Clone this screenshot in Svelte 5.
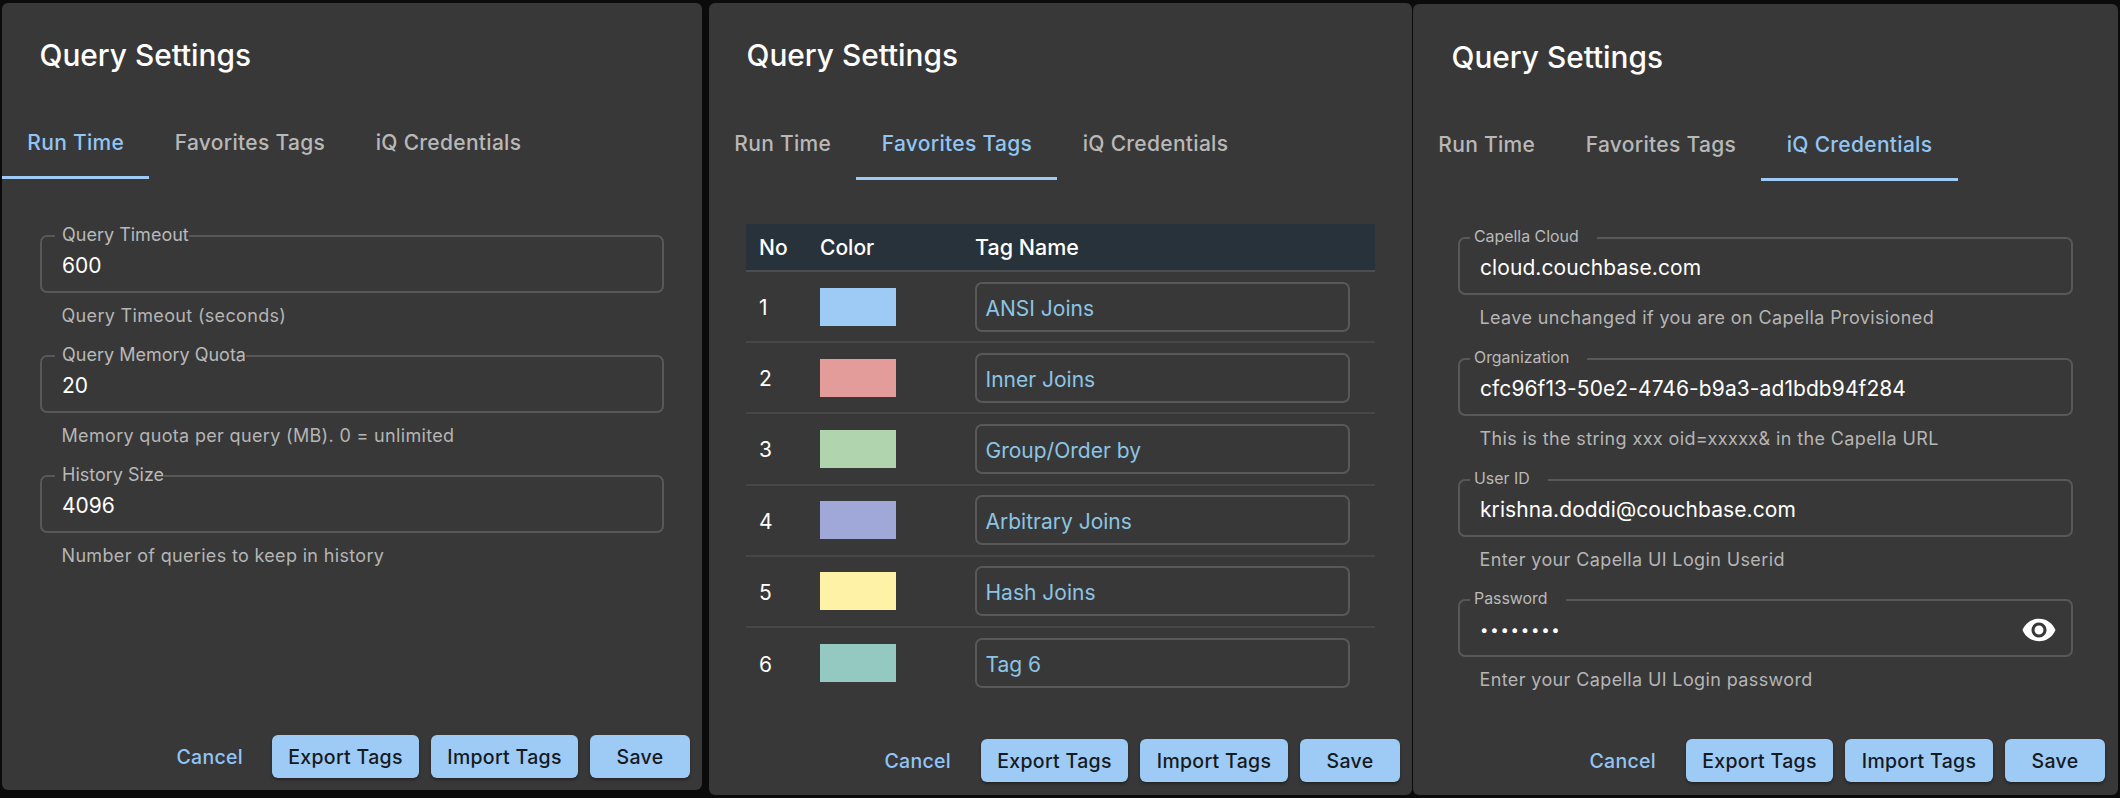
<script>
  const tabs = ['Run Time', 'Favorites Tags', 'iQ Credentials'];
  const runtime = [
    { label: 'Query Timeout', value: '600', help: 'Query Timeout (seconds)' },
    { label: 'Query Memory Quota', value: '20', help: 'Memory quota per query (MB). 0 = unlimited' },
    { label: 'History Size', value: '4096', help: 'Number of queries to keep in history' }
  ];
  const tags = [
    { no: 1, color: '#9ecbf6', name: 'ANSI Joins' },
    { no: 2, color: '#e49c9a', name: 'Inner Joins' },
    { no: 3, color: '#b0d4ae', name: 'Group/Order by' },
    { no: 4, color: '#a0a8d8', name: 'Arbitrary Joins' },
    { no: 5, color: '#fdf2a6', name: 'Hash Joins' },
    { no: 6, color: '#93c9c1', name: 'Tag 6' }
  ];
  const creds = [
    { label: 'Capella Cloud', value: 'cloud.couchbase.com', help: 'Leave unchanged if you are on Capella Provisioned' },
    { label: 'Organization', value: 'cfc96f13-50e2-4746-b9a3-ad1bdb94f284', help: 'This is the string xxx oid=xxxxx& in the Capella URL' },
    { label: 'User ID', value: 'krishna.doddi@couchbase.com', help: 'Enter your Capella UI Login Userid' },
    { label: 'Password', value: '••••••••', help: 'Enter your Capella UI Login password', secret: true }
  ];
</script>

{#snippet head(active)}
  <h2 class="title">Query Settings</h2>
  <div class="tabs">
    {#each tabs as tab, i}
      <button class="tab" class:active={i === active}>{tab}</button>
    {/each}
  </div>
{/snippet}

{#snippet actions()}
  <div class="actions">
    <button class="cancel">Cancel</button>
    <button class="solid">Export Tags</button>
    <button class="solid import">Import Tags</button>
    <button class="solid save">Save</button>
  </div>
{/snippet}

{#snippet field(f)}
  <div class="field">
    <fieldset>
      <legend>{f.label}</legend>
      <div class="row">
        <span class="value" class:dots={f.secret}>{f.value}</span>
        {#if f.secret}
          <svg class="eye" viewBox="0 0 24 24" width="36" height="36" aria-hidden="true">
            <path fill="#fff" d="M12 4.5C7 4.5 2.73 7.61 1 12c1.73 4.39 6 7.5 11 7.5s9.27-3.11 11-7.5c-1.73-4.39-6-7.5-11-7.5zM12 17c-2.76 0-5-2.24-5-5s2.24-5 5-5 5 2.24 5 5-2.24 5-5 5zm0-8c-1.66 0-3 1.34-3 3s1.34 3 3 3 3-1.34 3-3-1.34-3-3-3z"/>
          </svg>
        {/if}
      </div>
    </fieldset>
    <p class="help">{f.help}</p>
  </div>
{/snippet}

<div class="screen">
  <section class="panel p1">
    {@render head(0)}
    <div class="content">
      {#each runtime as f}{@render field(f)}{/each}
    </div>
    {@render actions()}
  </section>

  <section class="panel p2">
    {@render head(1)}
    <div class="content">
      <table>
        <thead>
          <tr><th class="no">No</th><th class="color">Color</th><th class="name">Tag Name</th></tr>
        </thead>
        <tbody>
          {#each tags as t}
            <tr>
              <td class="no">{t.no}</td>
              <td class="color"><div class="swatch" style:background={t.color}></div></td>
              <td class="name"><div class="tag-input">{t.name}</div></td>
            </tr>
          {/each}
        </tbody>
      </table>
    </div>
    {@render actions()}
  </section>

  <section class="panel p3">
    {@render head(2)}
    <div class="content">
      {#each creds as f}{@render field(f)}{/each}
    </div>
    {@render actions()}
  </section>
</div>

<style>
  :global(body) {
    margin: 0;
    background: #0b0b0b;
  }
  .screen {
    display: flex;
    align-items: flex-start;
    width: 2120px;
    height: 798px;
    padding: 3px 2px 0;
    box-sizing: border-box;
    overflow: hidden;
    background: #0b0b0b;
    font-family: Inter, "Liberation Sans", sans-serif;
  }
  .panel {
    display: flex;
    flex-direction: column;
    box-sizing: border-box;
    background: #383838;
    border-radius: 6px;
    flex: none;
  }
  .p1 { width: 700px; height: 787px; margin-right: 7px; }
  .p2 { width: 703px; height: 792px; margin-right: 1px; }
  .p3 { width: 705px; height: 791px; margin-top: 1px; }

  .title {
    margin: 34px 0 34px 37.5px;
    font-size: 29.8px;
    line-height: 36px;
    font-weight: 500;
    color: #fff;
  }
  .p2 .title { margin-bottom: 35px; }
  .p3 .title { margin: 35px 0 34px 38.5px; }

  .tabs { display: flex; }
  .tab {
    height: 72px;
    box-sizing: border-box;
    padding: 3px 25.3px 0;
    border: 0;
    border-bottom: 3px solid transparent;
    background: none;
    font: 500 21px/24px Inter, "Liberation Sans", sans-serif;
    letter-spacing: 0.3px;
    color: #b8b8b8;
  }
  .tab.active {
    color: #92c5f3;
    border-bottom-color: #9ecbf6;
  }

  .content { flex: 1; min-height: 0; }
  .p1 .content { padding: 47px 38px 0; }
  .p2 .content { padding: 44px 37px 0; }
  .p3 .content { padding: 47px 45px 0; }

  .field + .field { margin-top: 20px; }
  .p3 .field + .field { margin-top: 20.8px; }
  fieldset {
    margin: -1px 0 0;
    height: 68px;
    box-sizing: border-box;
    padding: 0 20px;
    border: 2px solid #585858;
    border-radius: 7px;
    min-width: 0;
  }
  legend {
    margin-left: -7px;
    padding: 0 0 2px 7px;
    font-size: 18px;
    line-height: 20px;
    color: #b9b9b9;
  }
  .p3 fieldset { padding: 0 14px 0 20px; }
  .p3 legend {
    margin-left: -10px;
    padding: 0 18px 2px 4px;
    font-size: 15.9px;
  }
  .row {
    display: flex;
    align-items: center;
    justify-content: space-between;
    height: 38px;
  }
  .value {
    font-size: 21px;
    line-height: 26px;
    color: #fff;
  }
  .p3 .value { letter-spacing: 0.08px; }
  .p3 .value.dots { font-size: 15px; letter-spacing: 1.75px; }
  .eye { flex: none; }
  .help {
    margin: 13px 0 0 21.5px;
    font-size: 18px;
    line-height: 20px;
    letter-spacing: 0.33px;
    color: #b5b5b5;
  }
  .p3 .help { letter-spacing: 0.38px; }

  table {
    width: 629px;
    border-collapse: collapse;
    table-layout: fixed;
  }
  th, td { padding: 0; text-align: left; color: #fff; font-size: 21px; font-weight: 500; }
  th.name { font-size: 21.5px; }
  thead tr { background: #28323a; height: 47px; }
  th { border-bottom: 2px solid #4c4f52; }
  tbody tr { height: 71.2px; }
  tbody tr + tr td { border-top: 2px solid #474747; }
  td { font-weight: 400; }
  th.no { width: 74px; padding-left: 13px; box-sizing: border-box; }
  td.no { padding: 2px 0 0 13px; box-sizing: border-box; }
  .color { width: 155px; }
  .swatch { width: 76px; height: 38px; }
  .tag-input {
    width: 375px;
    height: 50px;
    box-sizing: border-box;
    display: flex;
    align-items: center;
    padding: 3px 8.5px 0;
    border: 2px solid #585858;
    border-radius: 7px;
    color: #8cc4e4;
  }

  .actions {
    display: flex;
    justify-content: flex-end;
    align-items: center;
    gap: 12px;
    height: 43px;
    padding: 0 12px 12px;
    flex: none;
  }
  .p2 .actions { padding-bottom: 13px; }
  .p3 .actions { padding: 0 13px 13px; }
  button { cursor: pointer; }
  .actions button {
    height: 43px;
    box-sizing: border-box;
    border: 0;
    border-radius: 6px;
    font: 500 19.5px/24px Inter, "Liberation Sans", sans-serif;
    letter-spacing: 0.3px;
  }
  .actions .cancel {
    padding: 0 17px 0 0;
    background: none;
    color: #92c5f3;
  }
  .p2 .actions .cancel, .p3 .actions .cancel { padding-right: 18px; }
  .solid {
    width: 147px;
    padding: 0;
    background: #9ecbf6;
    color: #151a1f;
    box-shadow: 0 2px 3px rgba(0, 0, 0, 0.35);
  }
  .p2 .import, .p3 .import { width: 148px; }
  .actions .save { width: 100px; }
</style>
